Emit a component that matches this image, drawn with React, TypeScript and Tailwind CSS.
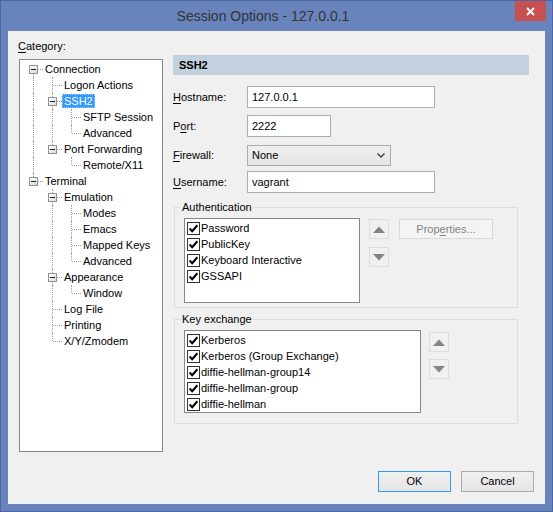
import React from 'react';

type Node = { label: string; children?: Node[]; selected?: boolean };

const tree: Node[] = [
  {
    label: 'Connection',
    children: [
      { label: 'Logon Actions' },
      { label: 'SSH2', selected: true, children: [{ label: 'SFTP Session' }, { label: 'Advanced' }] },
      { label: 'Port Forwarding', children: [{ label: 'Remote/X11' }] },
    ],
  },
  {
    label: 'Terminal',
    children: [
      {
        label: 'Emulation',
        children: [{ label: 'Modes' }, { label: 'Emacs' }, { label: 'Mapped Keys' }, { label: 'Advanced' }],
      },
      { label: 'Appearance', children: [{ label: 'Window' }] },
      { label: 'Log File' },
      { label: 'Printing' },
      { label: 'X/Y/Zmodem' },
    ],
  },
];

type Row = {
  label: string;
  guides: boolean[];
  first: boolean;
  last: boolean;
  hasChildren: boolean;
  selected?: boolean;
};

function flatten(nodes: Node[], guides: boolean[], root: boolean, rows: Row[]) {
  nodes.forEach((n, i) => {
    const last = i === nodes.length - 1;
    rows.push({
      label: n.label,
      guides,
      first: root && i === 0,
      last,
      hasChildren: !!n.children,
      selected: n.selected,
    });
    if (n.children) flatten(n.children, [...guides, !last], false, rows);
  });
  return rows;
}

const rows = flatten(tree, [], true, []);

function TreeRow({ row }: { row: Row }) {
  let vClass = 'top-0 bottom-0';
  if (row.first && !row.last) vClass = 'top-[8px] bottom-0';
  if (!row.first && row.last) vClass = 'top-0 h-[8px]';

  return (
    <div className="flex h-[16px] items-center">
      {row.guides.map((g, i) => (
        <div key={i} className="flex h-[16px] w-[19px] shrink-0">
          <div className="w-[9px]" />
          {g && <div className="h-full border-l border-dotted border-[#a0a0a0]" />}
        </div>
      ))}
      <div className="relative h-[16px] w-[19px] shrink-0">
        <div className={`absolute left-[9px] border-l border-dotted border-[#a0a0a0] ${vClass}`} />
        <div className="absolute left-[10px] top-[8px] w-[9px] border-t border-dotted border-[#a0a0a0]" />
        {row.hasChildren && (
          <div className="absolute left-[5px] top-[4px] flex h-[9px] w-[9px] items-center justify-center border border-[#919191] bg-linear-to-br from-white to-[#d8d8d8]">
            <div className="h-px w-[5px] bg-[#1e1e1e]" />
          </div>
        )}
      </div>
      <span
        className={
          row.selected
            ? 'border border-dotted border-[#9cc9f7] bg-[#3399ff] px-px leading-[12px] text-white'
            : 'px-[2px] leading-[14px] text-black'
        }
      >
        {row.label}
      </span>
    </div>
  );
}

function CheckItem({ label }: { label: string }) {
  return (
    <div className="flex h-[16px] items-center">
      <div className="ml-[2px] mr-px flex h-[13px] w-[13px] items-center justify-center border border-[#333333] bg-white">
        <svg width="11" height="11" viewBox="0 0 11 11">
          <path d="M1.6 5.6 L4.2 8.2 L9.4 2.2" fill="none" stroke="#000" strokeWidth="2.1" />
        </svg>
      </div>
      <span className="text-black">{label}</span>
    </div>
  );
}

function ArrowButton({ up }: { up?: boolean }) {
  return (
    <div className="flex h-[20px] w-[20px] items-center justify-center border border-[#dcdcdc] bg-[#f0f0f0]">
      <svg width="12" height="7" viewBox="0 0 12 7">
        <path d={up ? 'M0 7 L6 0.5 L12 7 Z' : 'M0 0 L12 0 L6 6.5 Z'} fill="#838383" />
      </svg>
    </div>
  );
}

function Field({
  label,
  ul,
  rest,
  value,
  width,
  className,
}: {
  label: string;
  ul: string;
  rest: string;
  value: string;
  width: string;
  className: string;
}) {
  return (
    <div className={`flex items-center ${className}`}>
      <span className="w-[74px] text-black">
        {label}
        <span className="underline underline-offset-2">{ul}</span>
        {rest}
      </span>
      <div className={`flex h-[22px] items-center border border-[#abadb3] bg-white pl-[4px] ${width}`}>
        {value}
      </div>
    </div>
  );
}

export default function App() {
  return (
    <div className="flex h-[512px] w-[553px] flex-col border border-[#4d66a6] bg-[#6983bd] font-['Liberation_Sans',Arial,sans-serif] text-[11px]">
      {/* Title bar */}
      <div className="flex h-[30px] shrink-0 items-start">
        <div className="flex h-[30px] flex-1 items-center justify-center pl-[10px] text-[14px] text-[#333333]">
          Session Options - 127.0.0.1
        </div>
        <div className="mr-[6px] flex h-[20px] w-[31px] items-center justify-center bg-[#c75050]">
          <svg width="9" height="9" viewBox="0 0 9 9">
            <path d="M1 1 L8 8 M8 1 L1 8" stroke="#fff" strokeWidth="1.8" />
          </svg>
        </div>
      </div>

      {/* Client area */}
      <div className="mx-[7px] flex h-[473px] flex-col bg-[#f0f0f0]">
        <div className="flex">
          {/* Category */}
          <div className="flex flex-col pl-[10px] pt-[8px]">
            <div className="h-[14px] leading-[14px] text-black">
              <span className="underline underline-offset-2">C</span>ategory:
            </div>
            <div className="ml-px mt-[6px] h-[393px] w-[144px] border border-[#828790] bg-white pl-[4px] pt-px">
              {rows.map((r, i) => (
                <TreeRow key={i} row={r} />
              ))}
            </div>
          </div>

          {/* SSH2 page */}
          <div className="ml-[10px] flex w-[356px] flex-col pt-[24px]">
            <div className="flex h-[20px] items-center bg-[#c3d0dd] pl-[6px] font-bold text-black">SSH2</div>

            <Field label="" ul="H" rest="ostname:" value="127.0.0.1" width="w-[188px]" className="mt-[11px]" />
            <Field label="P" ul="o" rest="rt:" value="2222" width="w-[84px]" className="mt-[7px]" />

            <div className="mt-[8px] flex items-center">
              <span className="w-[74px] text-black">
                <span className="underline underline-offset-2">F</span>irewall:
              </span>
              <div className="flex h-[21px] w-[144px] items-center justify-between border border-[#acacac] bg-linear-to-b from-[#f0f0f0] to-[#e5e5e5] pl-[4px] pr-[5px]">
                <span className="text-black">None</span>
                <svg width="8" height="5" viewBox="0 0 8 5">
                  <path d="M0.5 0.5 L4 4 L7.5 0.5" fill="none" stroke="#404040" strokeWidth="1.4" />
                </svg>
              </div>
            </div>

            <Field label="" ul="U" rest="sername:" value="vagrant" width="w-[188px]" className="mt-[5px]" />

            {/* Authentication */}
            <fieldset className="ml-px mt-[7px] w-[344px] border border-[#dcdcdc] pb-[4px]">
              <legend className="ml-[6px] px-px leading-[14px] text-black">Authentication</legend>
              <div className="mt-[4px] flex items-start pl-[9px]">
                <div className="h-[85px] w-[176px] border border-[#828790] bg-white pt-px">
                  <CheckItem label="Password" />
                  <CheckItem label="PublicKey" />
                  <CheckItem label="Keyboard Interactive" />
                  <CheckItem label="GSSAPI" />
                </div>
                <div className="ml-[9px] mt-px flex flex-col gap-[8px]">
                  <ArrowButton up />
                  <ArrowButton />
                </div>
                <div className="ml-[10px] mt-px flex h-[20px] w-[94px] items-center justify-center border border-[#d9d9d9] bg-[#f4f4f4] text-[#838383]">
                  Prop<span className="underline underline-offset-2">e</span>rties...
                </div>
              </div>
            </fieldset>

            {/* Key exchange */}
            <fieldset className="ml-px mt-[4px] w-[344px] border border-[#dcdcdc] pb-[10px]">
              <legend className="ml-[6px] px-px leading-[14px] text-black">Key exchange</legend>
              <div className="mt-[4px] flex items-start pl-[9px]">
                <div className="h-[83px] w-[237px] border border-[#828790] bg-white pt-px">
                  <CheckItem label="Kerberos" />
                  <CheckItem label="Kerberos (Group Exchange)" />
                  <CheckItem label="diffie-hellman-group14" />
                  <CheckItem label="diffie-hellman-group" />
                  <CheckItem label="diffie-hellman" />
                </div>
                <div className="ml-[8px] mt-[2px] flex flex-col gap-[7px]">
                  <ArrowButton up />
                  <ArrowButton />
                </div>
              </div>
            </fieldset>
          </div>
        </div>

        {/* Buttons */}
        <div className="mt-auto flex justify-end gap-[10px] pb-[12px] pr-[11px]">
          <div className="flex h-[21px] w-[73px] items-center justify-center border border-[#3399ff] bg-linear-to-b from-[#f0f0f0] to-[#e5e5e5] text-black">
            OK
          </div>
          <div className="flex h-[21px] w-[73px] items-center justify-center border border-[#acacac] bg-linear-to-b from-[#f0f0f0] to-[#e5e5e5] text-black">
            Cancel
          </div>
        </div>
      </div>
    </div>
  );
}
